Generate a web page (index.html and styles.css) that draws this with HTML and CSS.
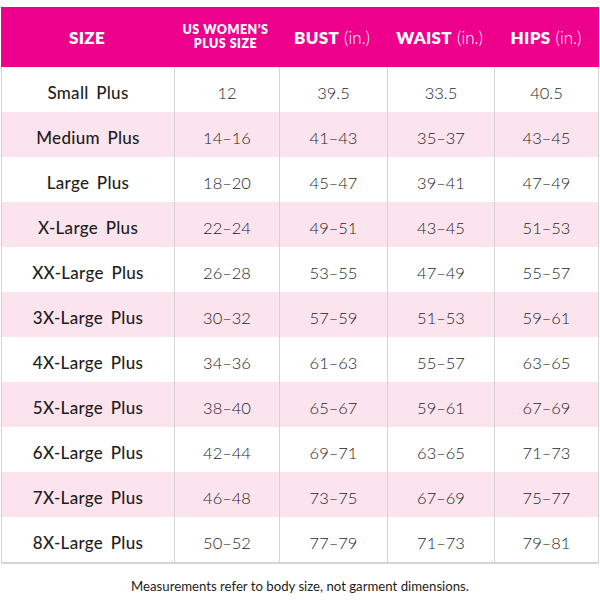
FILE: index.html
```html
<!DOCTYPE html>
<html>
<head>
<meta charset="utf-8">
<link rel="stylesheet" href="styles.css">
</head>
<body>
<div class="chart">
  <div class="head">
    <div class="hc">SIZE</div>
    <div class="hc small">US WOMEN’S<br>PLUS SIZE</div>
    <div class="hc">BUST <span class="unit">(in.)</span></div>
    <div class="hc">WAIST <span class="unit">(in.)</span></div>
    <div class="hc">HIPS <span class="unit">(in.)</span></div>
  </div>
  <div class="row"><div class="name">Small Plus</div><div class="c">12</div><div class="c">39.5</div><div class="c">33.5</div><div class="c">40.5</div></div>
  <div class="row alt"><div class="name">Medium Plus</div><div class="c">14–16</div><div class="c">41–43</div><div class="c">35–37</div><div class="c">43–45</div></div>
  <div class="row"><div class="name">Large Plus</div><div class="c">18–20</div><div class="c">45–47</div><div class="c">39–41</div><div class="c">47–49</div></div>
  <div class="row alt"><div class="name">X-Large Plus</div><div class="c">22–24</div><div class="c">49–51</div><div class="c">43–45</div><div class="c">51–53</div></div>
  <div class="row"><div class="name">XX-Large Plus</div><div class="c">26–28</div><div class="c">53–55</div><div class="c">47–49</div><div class="c">55–57</div></div>
  <div class="row alt"><div class="name">3X-Large Plus</div><div class="c">30–32</div><div class="c">57–59</div><div class="c">51–53</div><div class="c">59–61</div></div>
  <div class="row"><div class="name">4X-Large Plus</div><div class="c">34–36</div><div class="c">61–63</div><div class="c">55–57</div><div class="c">63–65</div></div>
  <div class="row alt"><div class="name">5X-Large Plus</div><div class="c">38–40</div><div class="c">65–67</div><div class="c">59–61</div><div class="c">67–69</div></div>
  <div class="row"><div class="name">6X-Large Plus</div><div class="c">42–44</div><div class="c">69–71</div><div class="c">63–65</div><div class="c">71–73</div></div>
  <div class="row alt"><div class="name">7X-Large Plus</div><div class="c">46–48</div><div class="c">73–75</div><div class="c">67–69</div><div class="c">75–77</div></div>
  <div class="row"><div class="name">8X-Large Plus</div><div class="c">50–52</div><div class="c">77–79</div><div class="c">71–73</div><div class="c">79–81</div></div>
</div>
<p class="note">Measurements refer to body size, not garment dimensions.</p>
</body>
</html>
```
FILE: styles.css
```css
html, body {
  margin: 0;
  padding: 0;
  background: #fff;
}
body {
  font-family: "Lato", "Noto Sans", sans-serif;
  color: #1e1e1e;
}
.chart {
  margin: 7px 0 0 1px;
  width: 598px;
  box-sizing: border-box;
  border-left: 1px solid #d4d4d4;
  border-right: 1px solid #d4d4d4;
  border-bottom: 2px solid #d4d4d4;
}
.head, .row {
  display: grid;
  grid-template-columns: 172px 105px 108px 107px 1fr;
}
.head {
  background: #ec008c;
  height: 60px;
  margin: 0 -1px;
  color: #fff;
}
.hc {
  display: flex;
  align-items: center;
  justify-content: center;
  text-align: center;
  font-weight: 800;
  font-size: 17px;
  letter-spacing: 0.3px;
}
.hc.small {
  font-size: 12.5px;
  line-height: 14px;
  letter-spacing: 0.5px;
}
.unit {
  font-weight: 300;
  margin-left: 5px;
  letter-spacing: 0;
}
.row {
  height: 45px;
}
.row.alt {
  background: #fce4ee;
}
.name, .c {
  display: flex;
  align-items: center;
  justify-content: center;
  font-size: 17px;
  padding-top: 6px;
  box-sizing: border-box;
}
.name {
  font-weight: 500;
  letter-spacing: 0.3px;
  word-spacing: 3px;
}
.c {
  font-weight: 300;
  border-left: 1px solid #d4d4d4;
  font-size: 16.5px;
}
.note {
  margin: 14px 0 0;
  text-align: center;
  font-size: 13.2px;
  color: #222;
}
```
